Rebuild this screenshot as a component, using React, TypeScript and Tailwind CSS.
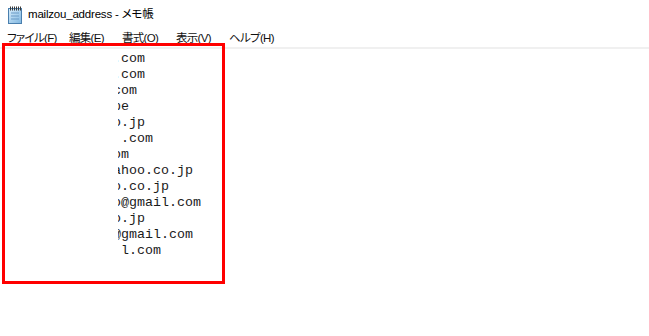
import React from "react";

const lines = [
  ".com",
  ".com",
  "com",
  "pe",
  "o.jp",
  " .com",
  "om",
  "ahoo.co.jp",
  "o.co.jp",
  "o@gmail.com",
  "o.jp",
  "@gmail.com",
  " l.com",
];

const menus = [
  { label: "ファイル(F)", w: "w-[62px]" },
  { label: "編集(E)", w: "w-[53px]" },
  { label: "書式(O)", w: "w-[54px]" },
  { label: "表示(V)", w: "w-[53px]" },
  { label: "ヘルプ(H)", w: "w-[60px]" },
];

function NotepadIcon() {
  return (
    <svg width="16" height="18" viewBox="0 0 16 18">
      <defs>
        <linearGradient id="pad" x1="0" y1="0" x2="1" y2="1">
          <stop offset="0" stopColor="#d9eefc" />
          <stop offset="1" stopColor="#7fb6e0" />
        </linearGradient>
      </defs>
      <rect x="1.5" y="2.5" width="13" height="15" fill="url(#pad)" stroke="#4a7fae" />
      <line x1="4" y1="7" x2="12" y2="7" stroke="#6a9bc6" />
      <line x1="4" y1="10" x2="12" y2="10" stroke="#6a9bc6" />
      <line x1="4" y1="13" x2="12" y2="13" stroke="#6a9bc6" />
      {[3, 5, 7, 9, 11, 13].map((x) => (
        <rect key={x} x={x} y="0.5" width="1" height="4" fill="#3a3a3a" />
      ))}
    </svg>
  );
}

export default function App() {
  return (
    <div className="relative w-[649px] h-[336px] bg-white overflow-hidden [font-family:'Liberation_Sans','Noto_Sans_CJK_JP',sans-serif]">
      <div className="h-[30px] flex items-center pl-[7px]">
        <NotepadIcon />
        <span className="ml-[5px] text-[11.5px] text-black [font-feature-settings:'palt'] tracking-[-0.2px] leading-none">
          mailzou_address - メモ帳
        </span>
      </div>
      <div className="h-[17px] flex items-center pl-[7px] text-[11.5px] text-[#111] [font-feature-settings:'palt'] tracking-[-0.7px]">
        {menus.map((m) => (
          <span key={m.label} className={`${m.w} shrink-0 whitespace-nowrap leading-none`}>
            {m.label}
          </span>
        ))}
      </div>
      <div className="h-[2px] bg-[#f0f0f0]" />
      <div className="pt-[2px] pl-[118px]">
        <div className="overflow-hidden w-[480px]">
          <div className="-ml-[5px] [font-family:'Liberation_Mono',monospace] text-[13.33px] leading-[16px] text-[#1a1a1a]">
            {lines.map((l, i) => (
              <div key={i} className="h-[16px] whitespace-pre">
                {l}
              </div>
            ))}
          </div>
        </div>
      </div>
      <div className="absolute left-[2px] top-[43px] w-[223px] h-[241px] border-[3px] border-[#ff0000]" />
    </div>
  );
}
